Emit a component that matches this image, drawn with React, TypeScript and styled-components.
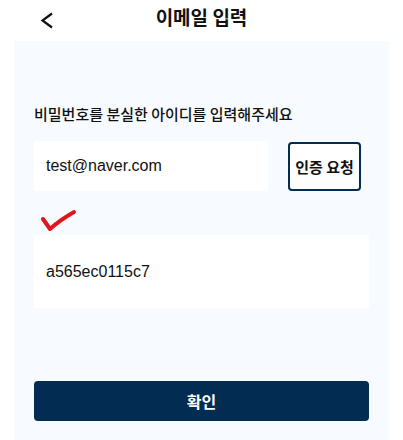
import styled, { createGlobalStyle } from "styled-components";

const GlobalStyle = createGlobalStyle`
  body {
    margin: 0;
    background: #ffffff;
    font-family: "Liberation Sans", "Noto Sans CJK KR", sans-serif;
    color: #111111;
  }
`;

const Page = styled.div`
  width: 403px;
  display: flex;
  flex-direction: column;
`;

const Header = styled.header`
  position: relative;
  height: 41px;
  display: flex;
  align-items: center;
  justify-content: center;
`;

const BackButton = styled.button`
  position: absolute;
  left: 40px;
  top: 12px;
  width: 14px;
  height: 17px;
  padding: 0;
  border: none;
  background: none;
  display: flex;
`;

const Title = styled.h1`
  margin: 0 0 8px;
  font-family: "Noto Sans CJK KR", sans-serif;
  font-size: 19px;
  font-weight: 700;
  color: #111111;
`;

const Panel = styled.main`
  margin: 0 14px;
  height: 399px;
  box-sizing: border-box;
  padding: 62px 20px 19px;
  background: #f7fbff;
  display: flex;
  flex-direction: column;
`;

const Label = styled.p`
  margin: 0 0 17px;
  font-family: "Noto Sans CJK KR", sans-serif;
  font-size: 15px;
  font-weight: 500;
  line-height: 21px;
  color: #111111;
`;

const Row = styled.div`
  display: flex;
  align-items: center;
  gap: 20px;
`;

const Input = styled.input<{ $grow?: boolean }>`
  flex: ${(p) => (p.$grow ? 1 : "none")};
  width: ${(p) => (p.$grow ? "auto" : "234px")};
  height: 50px;
  box-sizing: border-box;
  padding: 0 12px;
  border: none;
  outline: none;
  background: #ffffff;
  font-family: "Liberation Sans", "Noto Sans CJK KR", sans-serif;
  font-size: 16px;
  color: #111111;
`;

const RequestButton = styled.button`
  width: 73px;
  height: 49px;
  box-sizing: border-box;
  border: 2px solid #022c51;
  border-radius: 4px;
  background: #ffffff;
  padding: 0;
  font-family: "Noto Sans CJK KR", sans-serif;
  font-size: 15px;
  font-weight: 700;
  color: #111111;
`;

const CheckArea = styled.div`
  height: 44px;
  display: flex;
  align-items: flex-end;
  padding-bottom: 2px;
  box-sizing: border-box;
`;

const Spacer = styled.div`
  flex: 1;
`;

const ConfirmButton = styled.button`
  height: 40px;
  border: none;
  border-radius: 4px;
  background: #022c51;
  font-family: "Noto Sans CJK KR", sans-serif;
  font-size: 16px;
  font-weight: 700;
  color: #ffffff;
`;

export default function App() {
  return (
    <>
      <GlobalStyle />
      <Page>
        <Header>
          <BackButton aria-label="back">
            <svg width="14" height="17" viewBox="0 0 14 17">
              <path d="M12 1.5 L2.5 8.5 L12 15.5" fill="none" stroke="#111" strokeWidth="2.2" />
            </svg>
          </BackButton>
          <Title>이메일 입력</Title>
        </Header>
        <Panel>
          <Label>비밀번호를 분실한 아이디를 입력해주세요</Label>
          <Row>
            <Input defaultValue="test@naver.com" />
            <RequestButton>인증 요청</RequestButton>
          </Row>
          <CheckArea>
            <svg width="40" height="24" viewBox="0 0 40 24" style={{ marginLeft: 6 }}>
              <path
                d="M3 10 L10 20 Q20 11 34 3"
                fill="none"
                stroke="#e0161c"
                strokeWidth="4"
                strokeLinecap="round"
                strokeLinejoin="round"
              />
            </svg>
          </CheckArea>
          <Input $grow defaultValue="a565ec0115c7" />
          <Spacer />
          <ConfirmButton>확인</ConfirmButton>
        </Panel>
      </Page>
    </>
  );
}
